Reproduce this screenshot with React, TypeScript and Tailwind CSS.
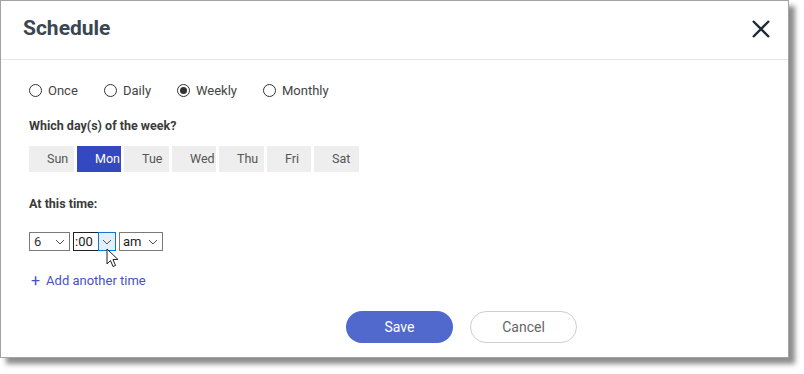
import React from 'react'

const days = [
  { d: 'Sun', w: 'w-[45px]' },
  { d: 'Mon', w: 'w-[44px]' },
  { d: 'Tue', w: 'w-[45px]' },
  { d: 'Wed', w: 'w-[44px]' },
  { d: 'Thu', w: 'w-[45px]' },
  { d: 'Fri', w: 'w-[44px]' },
  { d: 'Sat', w: 'w-[45px]' },
]
const freqs = [
  { label: 'Once', w: 'w-[75px]' },
  { label: 'Daily', w: 'w-[73px]' },
  { label: 'Weekly', w: 'w-[86px]' },
  { label: 'Monthly', w: 'w-[80px]' },
]

function Chevron() {
  return (
    <svg width="10" height="6" viewBox="0 0 10 6">
      <path d="M1 1l4 4 4-4" fill="none" stroke="#555" strokeWidth="1" />
    </svg>
  )
}

function Radio({ checked }: { checked?: boolean }) {
  return (
    <span className="w-[13px] h-[13px] rounded-full border border-[#333] bg-white flex items-center justify-center">
      {checked && <span className="w-[7px] h-[7px] rounded-full bg-[#333]" />}
    </span>
  )
}

export default function App() {
  return (
    <div className="w-[804px] h-[374px] bg-white" style={{ fontFamily: 'Roboto, "Liberation Sans", sans-serif' }}>
      <div className="w-[789px] h-[358px] bg-white border border-[#a3a3a3] shadow-[6px_6px_5px_rgba(0,0,0,0.45)] flex flex-col">
        {/* header */}
        <div className="h-[59px] flex items-center justify-between pl-[22px] pr-[16px] border-b border-[#e6e6e6] pb-[2px]">
          <h1 className="text-[21px] font-bold text-[#3a4650]">Schedule</h1>
          <svg width="22" height="22" viewBox="0 0 22 22">
            <path d="M3 3l16 16M19 3L3 19" stroke="#1e2b38" strokeWidth="2.4" />
          </svg>
        </div>

        <div className="pl-[28px] pt-[22px] text-[13px] text-[#444] relative flex-1">
          {/* frequency */}
          <div className="flex items-center h-[16px]">
            {freqs.map((f) => (
              <label key={f.label} className={`flex items-center gap-[6px] ${f.w}`}>
                <Radio checked={f.label === 'Weekly'} />
                <span className="text-[13px] leading-none pt-[1px]">{f.label}</span>
              </label>
            ))}
          </div>

          <div className="mt-[20px] font-bold text-[12.5px] leading-[16px] text-[#3b3b3b]">Which day(s) of the week?</div>

          <div className="mt-[12px] flex gap-[3px]">
            {days.map(({ d, w }) => (
              <div
                key={d}
                className={`${w} h-[26px] flex items-center pl-[18px] text-[12.5px] whitespace-nowrap ${
                  d === 'Mon' ? 'bg-[#3448c2] text-white' : 'bg-[#eeeeee] text-[#555]'
                }`}
              >
                {d}
              </div>
            ))}
          </div>

          <div className="mt-[24px] font-bold text-[12.5px] leading-[16px] text-[#3b3b3b]">At this time:</div>

          <div className="mt-[20px] flex gap-[3px] h-[19px] text-[13px] text-[#222]">
            <div className="w-[41px] border border-[#7a7a7a] flex items-center justify-between pl-[4px] pr-[4px]">
              <span className="text-[#333]">6</span>
              <Chevron />
            </div>
            <div className="w-[43px] border border-[#222] flex items-stretch">
              <span className="flex-1 flex items-center pl-[1px] text-[#222]">:00</span>
              <span className="w-[18px] -my-[1px] -mr-[1px] border border-[#0a78d4] bg-[#e3f0fb] flex items-center justify-center">
                <Chevron />
              </span>
            </div>
            <div className="w-[44px] border border-[#7a7a7a] flex items-center justify-between pl-[3px] pr-[4px]">
              <span className="text-[#222]">am</span>
              <Chevron />
            </div>
          </div>

          {/* mouse cursor */}
          <svg className="absolute left-[105px] top-[188px]" width="14" height="20" viewBox="0 0 14 20">
            <path d="M1 1v15l3.5-3.5 2.5 6 2.5-1-2.5-6h5z" fill="#fff" stroke="#222" strokeWidth="1" strokeLinejoin="round" />
          </svg>

          <div className="mt-[22px] flex items-center gap-[6px] text-[#4552c4] text-[13px] leading-[16px] pl-[2px]">
            <span className="text-[16px] leading-none">+</span>
            <span>Add another time</span>
          </div>

          <div className="mt-[22px] flex gap-[17px] pl-[317px]">
            <button className="w-[107px] h-[32px] rounded-full bg-[#5169cd] text-white text-[14px]">Save</button>
            <button className="w-[107px] h-[32px] rounded-full border border-[#cfcfcf] bg-white text-[#666] text-[14px]">Cancel</button>
          </div>
        </div>
      </div>
    </div>
  )
}
